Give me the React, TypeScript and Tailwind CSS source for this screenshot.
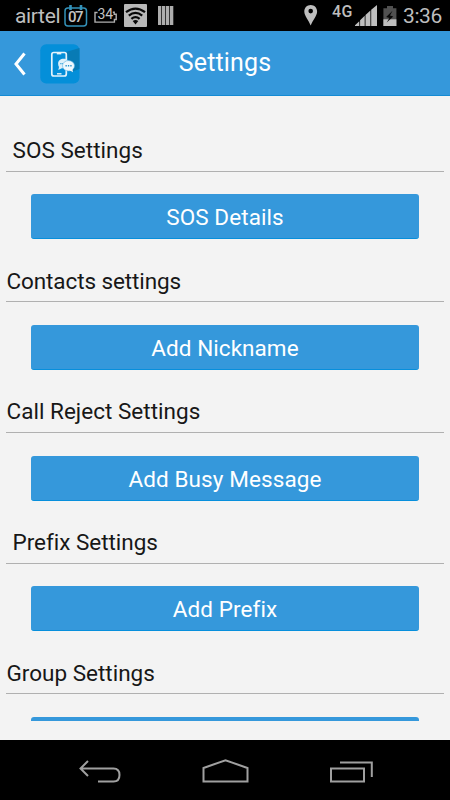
import React from 'react';
import clsx from 'clsx';

type SettingsSection = {
  title: string;
  action: string;
  indented?: boolean;
  titleClass: string;
  actionClass: string;
};

const sections: SettingsSection[] = [
  { title: 'SOS Settings', action: 'SOS Details', indented: true, titleClass: 'tracking-[0.03px]', actionClass: 'tracking-[0.08px]' },
  { title: 'Contacts settings', action: 'Add Nickname', titleClass: 'tracking-[-0.1px]', actionClass: 'tracking-[0.05px]' },
  { title: 'Call Reject Settings', action: 'Add Busy Message', titleClass: 'tracking-[0.02px]', actionClass: 'tracking-[0.1px]' },
  { title: 'Prefix Settings', action: 'Add Prefix', indented: true, titleClass: 'tracking-[-0.02px]', actionClass: 'tracking-[0.1px]' },
  { title: 'Group Settings', action: '', titleClass: 'tracking-[0px]', actionClass: 'tracking-[0.1px]' },
];

const CalendarIcon = () => (
  <svg width="24" height="22" viewBox="0 0 24 22" fill="none" className="shrink-0">
    <rect x="1" y="3" width="21.5" height="18" rx="3" stroke="#3392ba" strokeWidth="1.5" />
    <path d="M6.5 0v5M17 0v5" stroke="#3392ba" strokeWidth="2.6" />
    <text x="11.8" y="16.8" textAnchor="middle" fontSize="15" fontWeight="500" fill="#c4c4c4" textLength="15.5">07</text>
  </svg>
);

const BatteryCountIcon = () => (
  <svg width="24" height="20" viewBox="0 -2 24 20" fill="none" className="shrink-0 overflow-visible">
    <path d="M3.6 4.5H1v9.6h19.4v-2.6h1.8V6.2h-2v-2h-1.4" stroke="#b0b0b0" strokeWidth="1.4" />
    <text x="11.3" y="11.2" textAnchor="middle" fontSize="14" fill="#c4c4c4" textLength="15.5">34</text>
  </svg>
);

const WifiIcon = () => (
  <svg width="23" height="23" viewBox="0 0 23 23" fill="none" className="shrink-0">
    <rect width="23" height="23" rx="1" fill="#b8b8b8" />
    <path d="M2 8.2Q11.5 1 21 8.2M4.8 11.6Q11.5 6.2 18.2 11.6M7.4 14.8Q11.5 11.5 15.6 14.8" stroke="#080808" strokeWidth="2.3" />
    <path d="M8.7 17Q11.5 14.8 14.3 17L11.5 20.5z" fill="#080808" />
  </svg>
);

const BarcodeIcon = () => (
  <svg width="16" height="19" viewBox="0 0 16 19" className="shrink-0">
    <path d="M0 0h3.3v19H0zM4 0h3.3v19H4zM8 0h3.3v19H8zM12 0h3.3v19H12z" fill="#adadad" />
  </svg>
);

const PinIcon = () => (
  <svg width="14" height="21" viewBox="0 0 14 21" className="shrink-0">
    <path fillRule="evenodd" d="M6.7 0C3 0 .3 2.8.3 6.4c0 4.4 4.5 8.6 6.4 14.2 1.9-5.6 6.4-9.8 6.4-14.2C13.1 2.8 10.4 0 6.7 0zm0 3.8a2.3 2.3 0 1 1 0 4.6 2.3 2.3 0 0 1 0-4.6z" fill="#bebebe" />
  </svg>
);

const SignalIcon = () => (
  <svg width="22" height="21" viewBox="0 0 22 21" className="shrink-0">
    <path d="M0 21v-.8l4.3-4V21zM5.1 21v-5.8l4.6-4.4V21zM10.5 21V10.1l4.9-4.6V21zM16.2 21V4.8L22 0v21z" fill="#bebebe" />
  </svg>
);

const BatteryIcon = () => (
  <svg width="14" height="20" viewBox="0 0 14 20" className="shrink-0">
    <path d="M4 0h6v2.3h3.4V20H.4V2.3H4z" fill="#505050" />
    <path d="M.4 13.3h13V20H.4z" fill="#bebebe" />
    <path d="M9.5 4.8L3.2 11l3.2.9-2.7 4.7 6.5-6.2-3.2-.9z" fill="#090909" />
  </svg>
);

const StatusBar = () => (
  <div className="flex h-[31px] shrink-0 items-center bg-black pl-[15px] pr-[7px] text-[#bebebe]">
    <span className="w-[49px] pt-[2px] text-[21px] leading-[31px] tracking-[-0.35px]">airtel</span>
    <CalendarIcon />
    <div className="ml-[6px]"><BatteryCountIcon /></div>
    <div className="ml-[6px]"><WifiIcon /></div>
    <div className="ml-[11px]"><BarcodeIcon /></div>
    <div className="ml-auto flex items-center">
      <PinIcon />
      <span className="-mt-2 ml-[14px] w-[23px] text-[16px] font-medium leading-[18px] tracking-[0.3px]">4G</span>
      <SignalIcon />
      <div className="ml-[6px]"><BatteryIcon /></div>
      <span className="ml-[6px] w-[40px] whitespace-nowrap pt-[2px] text-[21px] leading-[31px] tracking-[-0.4px]">3:36</span>
    </div>
  </div>
);

const AppLogo = () => (
  <svg width="40" height="40" viewBox="0 0 40 40" fill="none" className="shrink-0">
    <rect x=".3" y=".3" width="39.2" height="39.2" rx="6" fill="#048fd9" />
    <path d="M26 8L39.5 4v21L31 28z" fill="#087bb5" />
    <rect x="11.8" y="8.5" width="14.5" height="23.5" rx="2" stroke="#e5f3fb" strokeWidth="1.7" />
    <path d="M16.8 9.5h4.5" stroke="#e5f3fb" strokeWidth="1.8" />
    <path d="M17 29.8h4.5" stroke="#e5f3fb" strokeWidth="1.4" />
    <path d="M19 23l-.7 2.9 3.6-1.6c4.2 0 7-1.9 7-4.6 0-2.9-2.3-5-5.3-5s-5.5 2.1-5.5 4.7c0 1.4.3 2.5.9 3.6z" fill="#dceff9" />
    <path d="M20.3 19.7h3" stroke="#2d9ed9" strokeWidth="1.3" strokeDasharray="1.2 .7" />
    <ellipse cx="28.5" cy="21.8" rx="6" ry="5.2" fill="#eff8fd" stroke="#5db4e2" strokeWidth=".6" />
    <path d="M29 26l4 2.3-.8-4z" fill="#eff8fd" />
    <path d="M25.5 21.8h6.2" stroke="#228fc8" strokeWidth="1.5" strokeDasharray="1.3 1.1" />
  </svg>
);

const Header = () => (
  <header className="grid h-[65px] shrink-0 grid-cols-[80px_1fr_80px] items-center border-b border-[#138bd4] bg-[#3598db]">
    <div className="flex items-center pl-[14px] pt-[1px]">
      <svg width="12" height="24" viewBox="0 0 12 24" fill="none" className="mr-[14px] shrink-0">
        <path d="M10.5 1.5L2 12l8.5 10.5" stroke="white" strokeWidth="3" />
      </svg>
      <AppLogo />
    </div>
    <h1 className="text-center text-[25px] leading-[32px] tracking-[0.15px] text-white">Settings</h1>
  </header>
);

const Section = ({ title, action, indented, titleClass, actionClass }: SettingsSection) => (
  <section className="h-[130.67px] shrink-0 px-[6px]">
    <h2
      className={clsx(
        'h-[40.6px] border-b border-[#b0b0b0] text-[22.5px] leading-[38px] text-[#171717]',
        indented ? 'pl-[6.5px]' : 'pl-[0.5px]',
        titleClass,
      )}
    >
      {title}
    </h2>
    <button
      className={clsx(
        'mx-[25px] mt-[22.6px] block h-[45px] w-[388px] rounded-[3px] border-b border-[#078fdc] bg-[#3598db] pt-[1px] text-center text-[22.5px] leading-[44px] text-white',
        actionClass,
      )}
    >
      {action}
    </button>
  </section>
);

const NavigationBar = () => (
  <nav className="flex h-[60px] shrink-0 items-center justify-between bg-black pl-[79px] pr-[77px] pt-[4px]">
    <svg width="42" height="24" viewBox="0 0 42 24" fill="none" stroke="#a0a0a0" strokeWidth="2">
      <path d="M9 1L1.5 8.5 9 16M2 8.5h32.5C38.5 8.5 40.5 11 40.5 15s-2 6.5-6 6.5H19" />
    </svg>
    <svg width="48" height="26" viewBox="0 0 48 26" fill="none" stroke="#a0a0a0" strokeWidth="2" className="mr-[2px]">
      <path d="M2.5 9L24.5 1.2 46.5 9v13.5h-44z" />
    </svg>
    <svg width="43" height="24" viewBox="0 0 43 24" fill="none" stroke="#a0a0a0" strokeWidth="2">
      <path d="M1 8.5h33V21.5H1zM10 2.5h31.8V17" />
    </svg>
  </nav>
);

const App = () => {
  return (
    <div className="flex h-[800px] w-[450px] flex-col overflow-hidden bg-[#f3f3f3] font-['Roboto',sans-serif]">
      <StatusBar />
      <Header />
      <main className="h-[625px] shrink-0 overflow-hidden pt-[35px]">
        {sections.map((section) => (
          <Section key={section.title} {...section} />
        ))}
      </main>
      <div className="h-[19px] shrink-0" />
      <NavigationBar />
    </div>
  );
};

export default App;
